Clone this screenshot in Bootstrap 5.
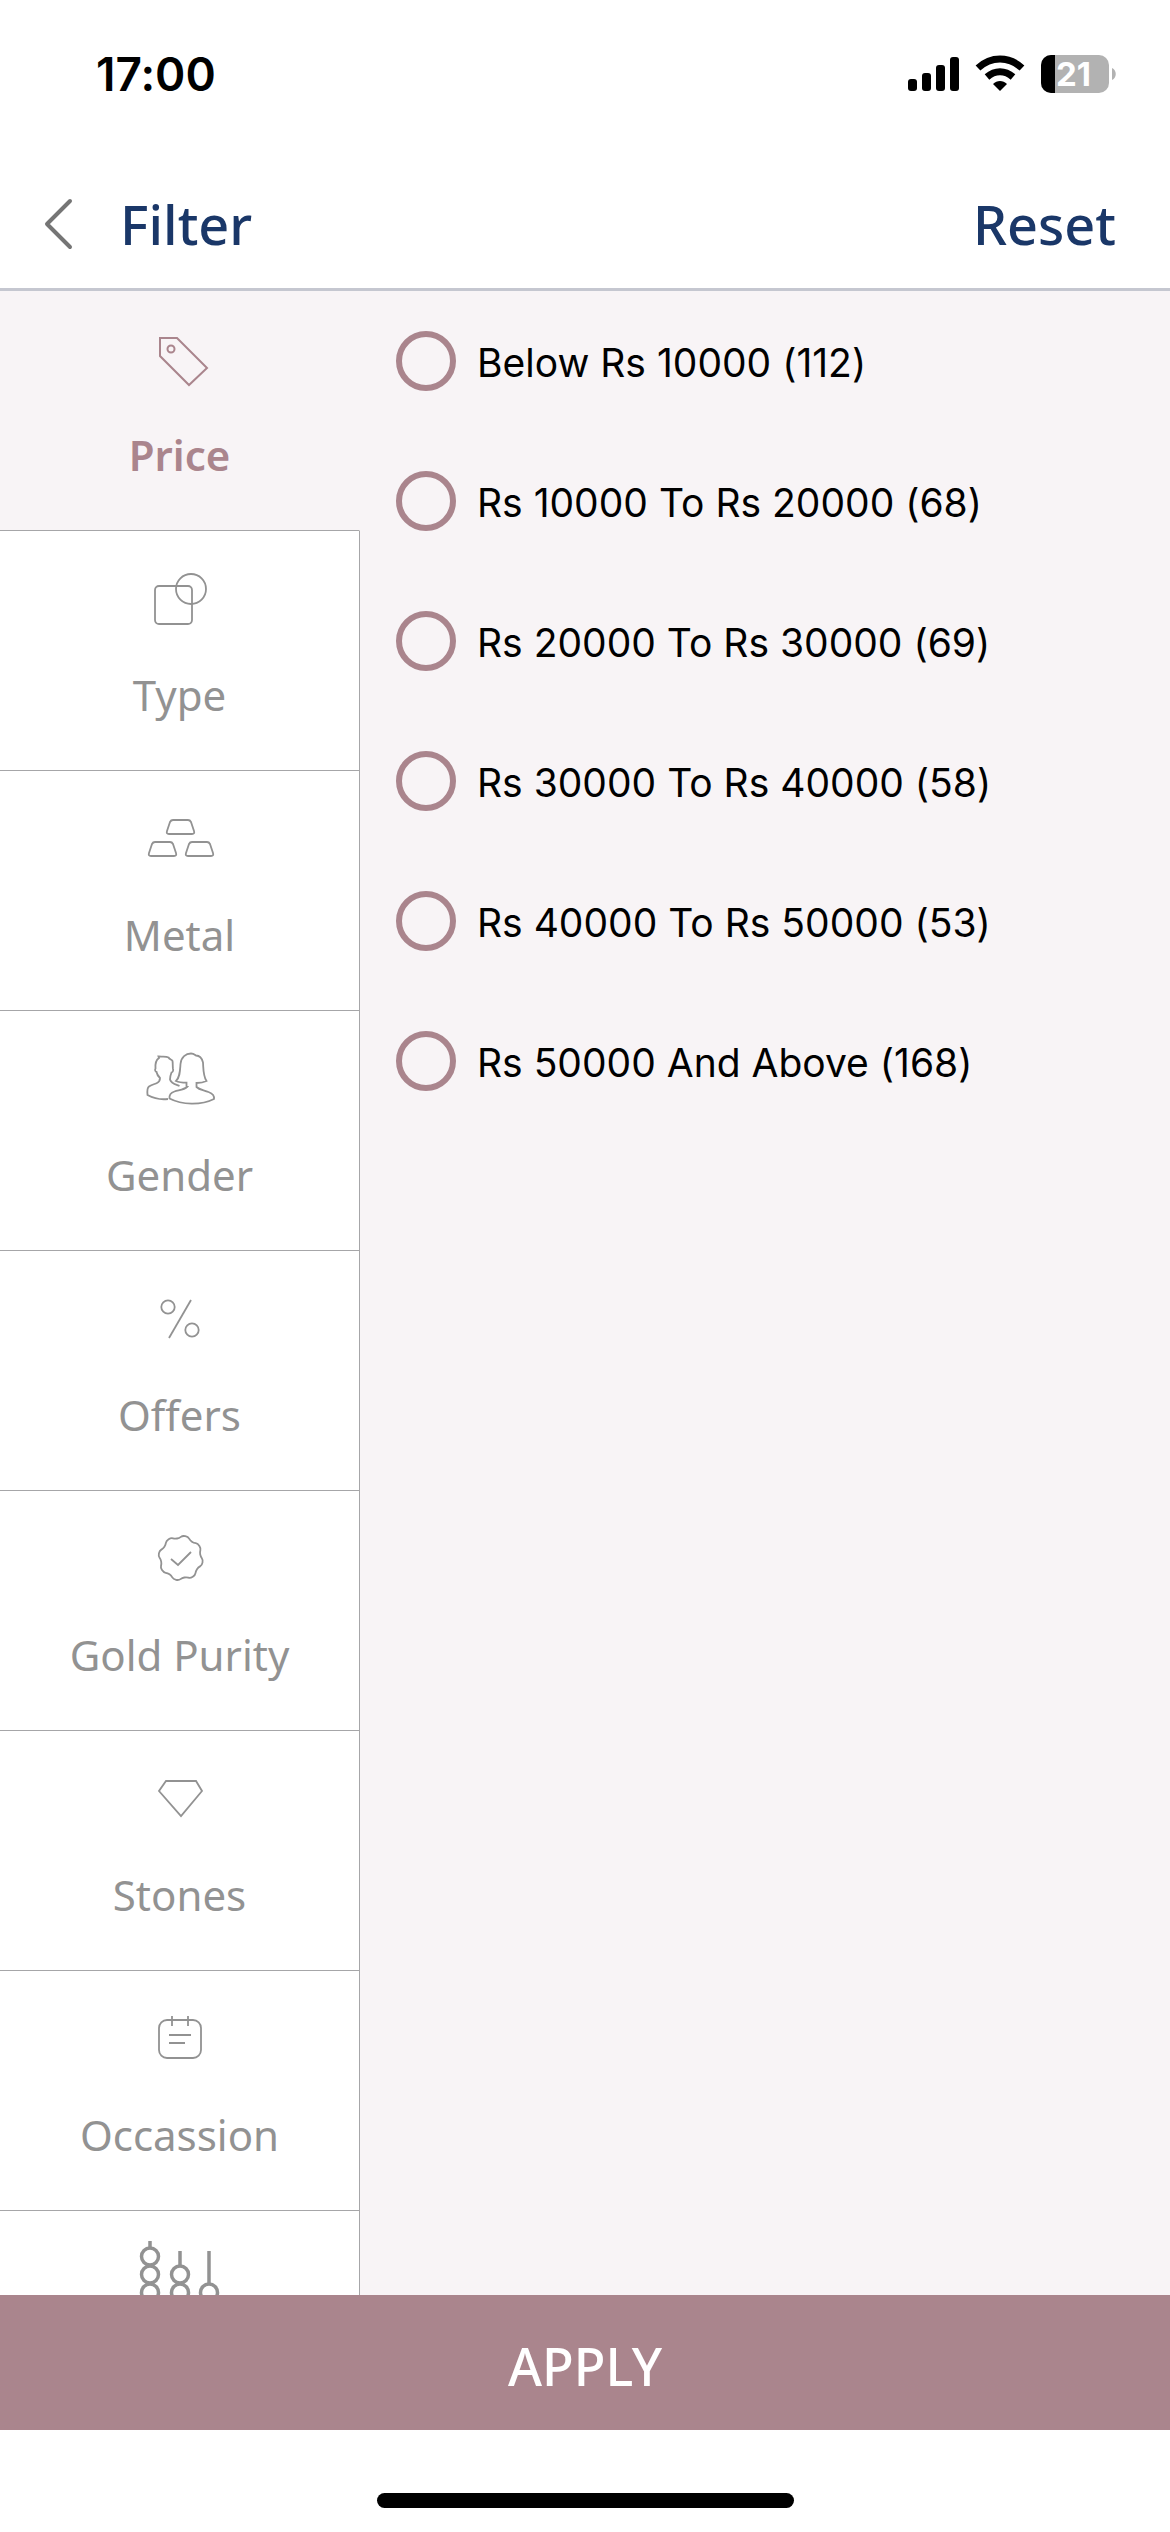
<!DOCTYPE html>
<html lang="en">
<head>
<meta charset="utf-8">
<meta name="viewport" content="width=device-width, initial-scale=1">
<title>Filter</title>
<link href="https://cdn.jsdelivr.net/npm/bootstrap@5.3.0/dist/css/bootstrap.min.css" rel="stylesheet">
<style>
  :root { --rose: #aa858d; --blush: #f8f4f6; --navy: #1a3768; --ash: #929292; --rule: #a6a6a8; }
  body { font-family: "Noto Sans", "Open Sans", sans-serif; font-variant-ligatures: none; background: #fff; color: #000; }
  svg { display: block; }
  .status-bar { height: 148px; padding: 0 54px 0 96px; font-family: Inter, sans-serif; }
  .clock { font-size: 46px; line-height: 56px; font-weight: 600; }
  .app-bar { height: 143px; padding: 20px 54px 8px 44px; border-bottom: 3px solid #c5c7d0; }
  .app-bar h1, .reset-btn { font-size: 54px; line-height: 64px; font-weight: 500; color: var(--navy); }
  .back-btn { width: 76px; }
  .side-tabs { flex: 0 0 360px; overflow: hidden; }
  .side-tabs .nav-link { height: 240px; flex: none; padding: 40px 0 0; border-radius: 0; border-right: 1px solid var(--rule); border-bottom: 1px solid var(--rule); color: var(--ash); font-size: 42px; line-height: 56px; gap: 36px; }
  .side-tabs .nav-link.active { background: var(--blush); color: var(--rose); font-weight: 600; border-right-color: var(--blush); }
  .side-tabs svg { width: 80px; height: 60px; fill: none; stroke: currentColor; stroke-width: 1.8px; overflow: visible; }
  .side-tabs .bold-icon { stroke-width: 3.5px; }
  .options { background: var(--blush); padding: 40px 36px; font-family: Inter, sans-serif; font-size: 39px; line-height: 60px; gap: 80px; }
  .options .form-check { gap: 21px; }
  .options label { padding-top: 2px; margin-bottom: -2px; }
  .options .form-check-input { width: 60px; height: 60px; border: 6px solid var(--rose); background-color: transparent; margin: 0; flex: none; }
  .apply-btn { height: 135px; padding: 10px 0 4px; background: var(--rose); color: #fff; font-size: 52px; line-height: 64px; font-weight: 500; }
  .home-area { height: 102px; padding-bottom: 24px; }
  .home-pill { width: 417px; height: 15px; border-radius: 8px; background: #000; }
</style>
<script src="https://cdn.jsdelivr.net/npm/bootstrap@5.3.0/dist/js/bootstrap.bundle.min.js"></script>
</head>
<body class="d-flex flex-column vh-100 overflow-hidden">
<div class="status-bar d-flex align-items-center justify-content-between flex-shrink-0">
  <span class="clock">17:00</span>
  <svg width="208" height="40" viewBox="0 0 208 40" role="img" aria-label="Signal, Wi-Fi, battery 21 percent">
    <g fill="#000">
      <rect x="0" y="25" width="9" height="12" rx="3"/><rect x="14" y="19" width="9" height="18" rx="3"/><rect x="28" y="11" width="9" height="26" rx="3"/><rect x="42" y="3" width="9" height="34" rx="3"/>
      <path d="M92 37l-7-7c4-4 10-4 14 0z"/>
    </g>
    <path d="M70 14c13-12 31-12 44 0M79 23c8-7 18-7 26 0" fill="none" stroke="#000" stroke-width="7"/>
    <rect x="133" y="1" width="68" height="38" rx="10" fill="#b2b2b2"/><path d="M147 1v38h-4a10 10 0 0 1-10-10V11a10 10 0 0 1 10-10z" fill="#000"/><path d="M204 14c5 2 5 10 0 12z" fill="#b2b2b2"/>
    <text x="148" y="32" font-family="Inter" font-size="33" font-weight="700" fill="#fff">21</text>
  </svg>
</div>
<header class="app-bar d-flex align-items-center flex-shrink-0">
  <button type="button" class="back-btn btn p-0 border-0 rounded-0" aria-label="Back"><svg width="30" height="54" viewBox="0 0 30 54" fill="none" stroke="#757575" stroke-width="4" stroke-linecap="round" stroke-linejoin="round"><path d="M26 4L3 27l23 23"/></svg></button>
  <h1 class="m-0">Filter</h1>
  <button type="button" class="reset-btn btn p-0 border-0 ms-auto">Reset</button>
</header>
<main class="d-flex flex-grow-1 overflow-hidden">
  <nav class="side-tabs nav flex-column flex-nowrap" aria-label="Filter groups">
    <a class="nav-link active d-flex flex-column align-items-center" href="#price" aria-current="true">
      <svg viewBox="0 0 80 60"><path d="M20 7h17l30 30-18 17-29-29z" stroke-width="2"/><circle cx="31" cy="18" r="3.5" stroke-width="2"/></svg>Price</a>
    <a class="nav-link d-flex flex-column align-items-center" href="#type">
      <svg viewBox="0 0 80 60"><rect x="15" y="15" width="37" height="38" rx="4"/><circle cx="51" cy="18" r="15"/></svg>Type</a>
    <a class="nav-link d-flex flex-column align-items-center" href="#metal">
      <svg viewBox="0 0 80 60" stroke-linejoin="round"><path id="ingot" d="M33 9h15q2 0 3 2l3 9q1 3-2 3H29q-3 0-2-3l3-9q1-2 3-2z"/><use href="#ingot" x="-18" y="22"/><use href="#ingot" x="19" y="22"/></svg>Metal</a>
    <a class="nav-link d-flex flex-column align-items-center" href="#gender">
      <svg viewBox="0 0 80 60"><path d="M28 48c-8 1-15-1-20.500-4C7 39 7 37 9 35.500c3-2 6-2.500 8-3.500 2-1 3-3 3-5-2-2-3-3-3.500-6-1 0-2-2-1-3.500C15 12 16 9 19 7l-.5-1.500C22 6 26 5 28.500 6.500c1 2 3 2 4 3.500.5 3 0 5 .5 8 .5 1 0 3-1.500 3.500-1 2.500-1.500 4-1.500 7 1 4 6 5 9.500 6.500"/><path d="M46.500 36v-4.300c-4 0-7 0-10.500-1.700 4-4 4-10 4.500-17C41 6 46 2.500 51 2.500c3 0 4 1.500 5 2 4 0 6 3 7 7 .5 7 0 13 3.500 18.500-3 1.500-6 2-10 2V36c3 3 8 3 12 5 4 1.500 6 4 5.500 7-13 6.500-32 6-44.500-.500-.5-4 2-6 5-7 5-1.500 10-2 12.500-4.500z"/></svg>Gender</a>
    <a class="nav-link d-flex flex-column align-items-center" href="#offers">
      <svg viewBox="0 0 80 60"><circle cx="28" cy="16" r="6.700"/><circle cx="52" cy="39" r="6.700"/><path d="M51 9L29 47"/></svg>Offers</a>
    <a class="nav-link d-flex flex-column align-items-center" href="#purity">
      <svg viewBox="0 0 80 60"><path d="M45.300 5.200C50.200 6.200 47.800 7.900 51.900 10.700S56.700 10.700 59.400 14.900 59.300 18.500 60.200 23.400 63.500 26.700 62.500 31.600 59.800 34.100 57 38.200 57 43 52.800 45.700 49.200 45.600 44.300 46.500 41 49.800 36.100 48.800 33.600 46.100 29.500 43.300 24.700 43.300 22 39.100 22.100 35.500 21.200 30.600 17.900 27.300 18.900 22.400 21.600 19.900 24.400 15.800 24.400 11 28.600 8.300 32.200 8.400 37.100 7.500 40.400 4.200 45.300 5.200z"/><path d="M31 28l7 6 13-13"/></svg>Gold Purity</a>
    <a class="nav-link d-flex flex-column align-items-center" href="#stones">
      <svg viewBox="0 0 80 60"><path d="M26 10h30l6 10-21 25-22-25z"/></svg>Stones</a>
    <a class="nav-link d-flex flex-column align-items-center" href="#occassion">
      <svg viewBox="0 0 80 60"><rect x="19" y="9" width="42" height="38" rx="8"/><path d="M32 5v10M48 5v10M29 24h22M29 32h16"/></svg>Occassion</a>
    <a class="nav-link d-flex flex-column align-items-center" href="#more" aria-label="More filters">
      <svg class="bold-icon" viewBox="0 0 80 60"><path d="M10 -10v6M40 0v14M69 0v32"/><circle cx="10" cy="5.500" r="8.500"/><circle cx="10" cy="23.500" r="8.500"/><circle cx="10" cy="41.500" r="8.500"/><circle cx="40" cy="23.500" r="8.500"/><circle cx="40" cy="41.500" r="8.500"/><circle cx="69" cy="41.500" r="8.500"/></svg></a>
  </nav>
  <section class="options flex-grow-1 d-flex flex-column" aria-label="Price">
    <div class="form-check d-flex align-items-center p-0 m-0"><input class="form-check-input" type="radio" name="price" id="p1"><label for="p1">Below Rs 10000 (112)</label></div>
    <div class="form-check d-flex align-items-center p-0 m-0"><input class="form-check-input" type="radio" name="price" id="p2"><label for="p2">Rs 10000 To Rs 20000 (68)</label></div>
    <div class="form-check d-flex align-items-center p-0 m-0"><input class="form-check-input" type="radio" name="price" id="p3"><label for="p3">Rs 20000 To Rs 30000 (69)</label></div>
    <div class="form-check d-flex align-items-center p-0 m-0"><input class="form-check-input" type="radio" name="price" id="p4"><label for="p4">Rs 30000 To Rs 40000 (58)</label></div>
    <div class="form-check d-flex align-items-center p-0 m-0"><input class="form-check-input" type="radio" name="price" id="p5"><label for="p5">Rs 40000 To Rs 50000 (53)</label></div>
    <div class="form-check d-flex align-items-center p-0 m-0"><input class="form-check-input" type="radio" name="price" id="p6"><label for="p6">Rs 50000 And Above (168)</label></div>
  </section>
</main>
<button type="button" class="apply-btn btn w-100 rounded-0 border-0 flex-shrink-0">APPLY</button>
<div class="home-area d-flex align-items-end justify-content-center flex-shrink-0"><div class="home-pill"></div></div>
</body>
</html>
